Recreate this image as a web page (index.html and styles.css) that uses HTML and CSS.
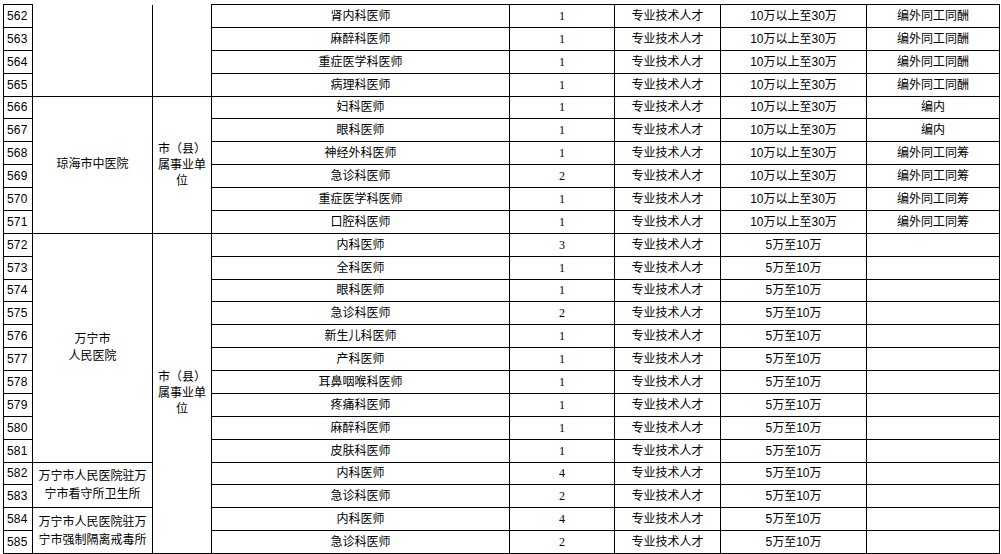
FILE: index.html
```html
<!DOCTYPE html>
<html lang="zh-CN">
<head>
<meta charset="utf-8">
<title>岗位表</title>
<link rel="stylesheet" href="styles.css">
</head>
<body>
<div class="sheet">
<table class="grid">
  <colgroup>
    <col class="c-no">
    <col class="c-unit">
    <col class="c-type">
    <col class="c-post">
    <col class="c-count">
    <col class="c-cat">
    <col class="c-pay">
    <col class="c-note">
  </colgroup>
  <tbody>
    <tr>
      <td class="no">562</td>
      <td class="unit cont" rowspan="4"></td>
      <td class="type cont" rowspan="4"></td>
      <td>肾内科医师</td><td class="num">1</td><td>专业技术人才</td><td>10万以上至30万</td><td>编外同工同酬</td>
    </tr>
    <tr><td class="no">563</td><td>麻醉科医师</td><td class="num">1</td><td>专业技术人才</td><td>10万以上至30万</td><td>编外同工同酬</td></tr>
    <tr><td class="no">564</td><td>重症医学科医师</td><td class="num">1</td><td>专业技术人才</td><td>10万以上至30万</td><td>编外同工同酬</td></tr>
    <tr><td class="no">565</td><td>病理科医师</td><td class="num">1</td><td>专业技术人才</td><td>10万以上至30万</td><td>编外同工同酬</td></tr>
    <tr>
      <td class="no">566</td>
      <td class="unit" rowspan="6">琼海市中医院</td>
      <td class="type" rowspan="6">市（县）属事业单位</td>
      <td>妇科医师</td><td class="num">1</td><td>专业技术人才</td><td>10万以上至30万</td><td>编内</td>
    </tr>
    <tr><td class="no">567</td><td>眼科医师</td><td class="num">1</td><td>专业技术人才</td><td>10万以上至30万</td><td>编内</td></tr>
    <tr><td class="no">568</td><td>神经外科医师</td><td class="num">1</td><td>专业技术人才</td><td>10万以上至30万</td><td>编外同工同筹</td></tr>
    <tr><td class="no">569</td><td>急诊科医师</td><td class="num">2</td><td>专业技术人才</td><td>10万以上至30万</td><td>编外同工同筹</td></tr>
    <tr><td class="no">570</td><td>重症医学科医师</td><td class="num">1</td><td>专业技术人才</td><td>10万以上至30万</td><td>编外同工同筹</td></tr>
    <tr><td class="no">571</td><td>口腔科医师</td><td class="num">1</td><td>专业技术人才</td><td>10万以上至30万</td><td>编外同工同筹</td></tr>
    <tr>
      <td class="no">572</td>
      <td class="unit" rowspan="10">万宁市<br>人民医院</td>
      <td class="type" rowspan="14">市（县）属事业单位</td>
      <td>内科医师</td><td class="num">3</td><td>专业技术人才</td><td>5万至10万</td><td></td>
    </tr>
    <tr><td class="no">573</td><td>全科医师</td><td class="num">1</td><td>专业技术人才</td><td>5万至10万</td><td></td></tr>
    <tr><td class="no">574</td><td>眼科医师</td><td class="num">1</td><td>专业技术人才</td><td>5万至10万</td><td></td></tr>
    <tr><td class="no">575</td><td>急诊科医师</td><td class="num">2</td><td>专业技术人才</td><td>5万至10万</td><td></td></tr>
    <tr><td class="no">576</td><td>新生儿科医师</td><td class="num">1</td><td>专业技术人才</td><td>5万至10万</td><td></td></tr>
    <tr><td class="no">577</td><td>产科医师</td><td class="num">1</td><td>专业技术人才</td><td>5万至10万</td><td></td></tr>
    <tr><td class="no">578</td><td>耳鼻咽喉科医师</td><td class="num">1</td><td>专业技术人才</td><td>5万至10万</td><td></td></tr>
    <tr><td class="no">579</td><td>疼痛科医师</td><td class="num">1</td><td>专业技术人才</td><td>5万至10万</td><td></td></tr>
    <tr><td class="no">580</td><td>麻醉科医师</td><td class="num">1</td><td>专业技术人才</td><td>5万至10万</td><td></td></tr>
    <tr><td class="no">581</td><td>皮肤科医师</td><td class="num">1</td><td>专业技术人才</td><td>5万至10万</td><td></td></tr>
    <tr>
      <td class="no">582</td>
      <td class="unit small" rowspan="2">万宁市人民医院驻万宁市看守所卫生所</td>
      <td>内科医师</td><td class="num">4</td><td>专业技术人才</td><td>5万至10万</td><td></td>
    </tr>
    <tr><td class="no">583</td><td>急诊科医师</td><td class="num">2</td><td>专业技术人才</td><td>5万至10万</td><td></td></tr>
    <tr>
      <td class="no">584</td>
      <td class="unit small" rowspan="2">万宁市人民医院驻万宁市强制隔离戒毒所</td>
      <td>内科医师</td><td class="num">4</td><td>专业技术人才</td><td>5万至10万</td><td></td>
    </tr>
    <tr><td class="no">585</td><td>急诊科医师</td><td class="num">2</td><td>专业技术人才</td><td>5万至10万</td><td></td></tr>
  </tbody>
</table>
</div>
</body>
</html>
```

FILE: styles.css
```css
html, body {
  margin: 0;
  padding: 0;
  background: #ffffff;
}

body {
  font-family: "Liberation Sans", "Noto Sans CJK SC", sans-serif;
  font-size: 12px;
  color: #000000;
}

.sheet {
  padding: 4px 0 0 3px;
}

.grid {
  border-collapse: collapse;
  table-layout: fixed;
  width: 996px;
}

.c-no { width: 29px; }
.c-unit { width: 120px; }
.c-type { width: 59px; }
.c-post { width: 298px; }
.c-count { width: 105px; }
.c-cat { width: 106px; }
.c-pay { width: 146px; }
.c-note { width: 133px; }

.grid tr {
  height: 22.875px;
}

.grid td {
  border: 1px solid #000000;
  padding: 0 2px;
  text-align: center;
  vertical-align: middle;
  white-space: nowrap;
  line-height: 16px;
  overflow: hidden;
}

.grid td.no {
  text-align: left;
  padding-left: 3px;
  letter-spacing: 0.2px;
}

.grid td.cont {
  border-top: none;
}

.grid td.unit {
  white-space: normal;
  line-height: 17px;
}

.grid td.unit.small {
  line-height: 18px;
  padding: 0 1px;
}

.grid td.type {
  white-space: normal;
  line-height: 16px;
  padding: 0 3px;
}

.grid td.num {
  font-family: "Liberation Serif", "Noto Sans CJK SC", serif;
}
```
